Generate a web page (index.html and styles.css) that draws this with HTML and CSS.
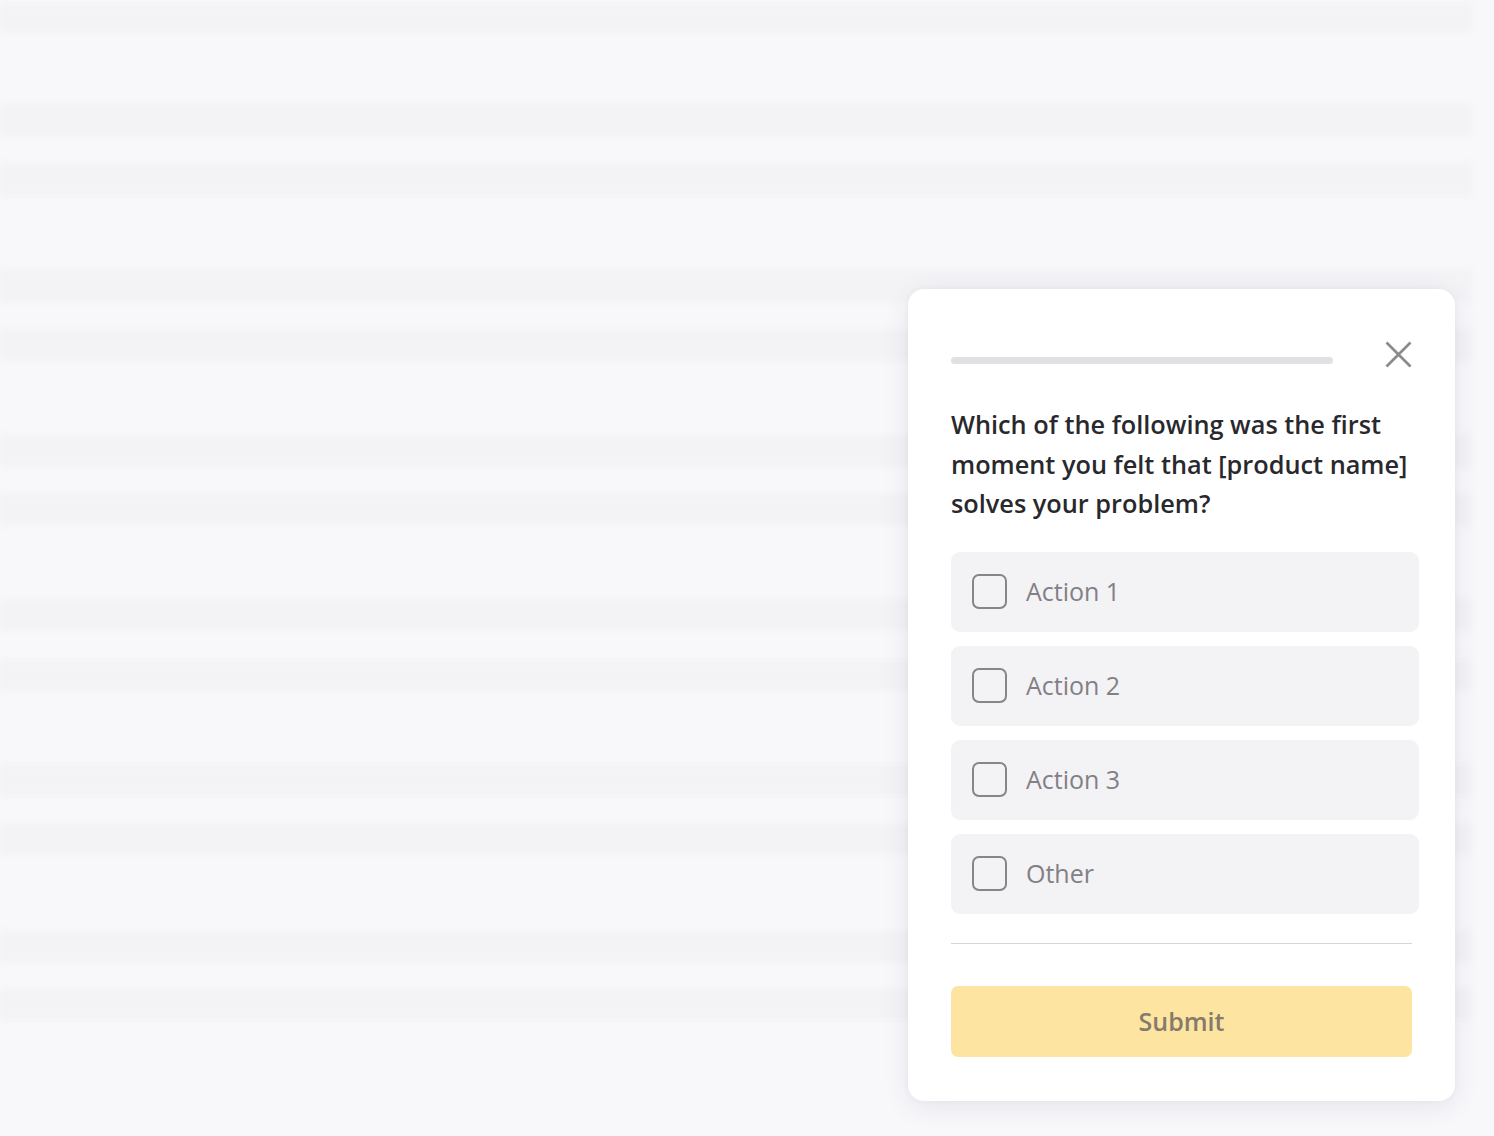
FILE: index.html
```html
<!DOCTYPE html>
<html lang="en">
<head>
<meta charset="utf-8">
<title>Survey</title>
<link rel="stylesheet" href="styles.css">
</head>
<body>
<div class="page">
  <div class="backdrop">
    <div class="stripe s1"></div>
    <div class="stripe s2"></div>
    <div class="stripe s3"></div>
    <div class="stripe s4"></div>
    <div class="stripe s5"></div>
    <div class="stripe s6"></div>
    <div class="stripe s7"></div>
    <div class="stripe s8"></div>
    <div class="stripe s9"></div>
    <div class="stripe s10"></div>
    <div class="stripe s11"></div>
    <div class="stripe s12"></div>
    <div class="stripe s13"></div>
  </div>

  <div class="card">
    <div class="card-head">
      <div class="progress"></div>
      <button class="close" aria-label="Close">
        <svg width="27" height="27" viewBox="0 0 27 27"><path d="M1.5 1.5 L25.5 25.5 M25.5 1.5 L1.5 25.5" stroke="#8b8a8c" stroke-width="2.7" fill="none" stroke-linecap="butt"/></svg>
      </button>
    </div>
    <h2 class="question">Which of the following was the first moment you felt that [product name] solves your problem?</h2>
    <div class="options">
      <label class="option"><span class="box"></span><span class="label">Action 1</span></label>
      <label class="option"><span class="box"></span><span class="label">Action 2</span></label>
      <label class="option"><span class="box"></span><span class="label">Action 3</span></label>
      <label class="option"><span class="box"></span><span class="label">Other</span></label>
    </div>
    <div class="divider"></div>
    <button class="submit">Submit</button>
  </div>
</div>
</body>
</html>
```

FILE: styles.css
```css
html, body {
  margin: 0;
  padding: 0;
}
body {
  background: #f8f7fa;
  font-family: "Open Sans", "Noto Sans", sans-serif;
  overflow: hidden;
}
.page {
  position: relative;
  width: 1494px;
  height: 1136px;
}
.backdrop {
  display: flex;
  flex-direction: column;
  width: 1472px;
  filter: blur(3px);
}
.stripe {
  height: 30px;
  background: #f3f2f5;
}
.s1 { margin-top: 4px; height: 29px; }
.s2 { margin-top: 70px; height: 33px; }
.s3 { margin-top: 27px; height: 33px; }
.s4 { margin-top: 74px; height: 32px; }
.s5 { margin-top: 27px; height: 32px; }
.s6 { margin-top: 74px; height: 32px; }
.s7 { margin-top: 27px; height: 31px; }
.s8 { margin-top: 74px; height: 31px; }
.s9 { margin-top: 30px; height: 30px; }
.s10 { margin-top: 74px; height: 32px; }
.s11 { margin-top: 28px; height: 30px; }
.s12 { margin-top: 77px; height: 31px; }
.s13 { margin-top: 27px; height: 31px; }

.card {
  position: absolute;
  left: 908px;
  top: 289px;
  width: 547px;
  height: 812px;
  box-sizing: border-box;
  padding: 52px 43px 44px 43px;
  background: #ffffff;
  border-radius: 16px;
  box-shadow: 0 6px 28px rgba(40, 30, 60, 0.08), 0 0 6px rgba(40, 30, 60, 0.04);
  display: flex;
  flex-direction: column;
}
.card-head {
  display: flex;
  align-items: flex-start;
  height: 26px;
}
.progress {
  width: 382px;
  height: 7px;
  margin-top: 16px;
  border-radius: 4px;
  background: #e1e0e3;
}
.close {
  margin-left: auto;
  margin-right: 0;
  width: 27px;
  height: 27px;
  padding: 0;
  border: 0;
  background: none;
  display: block;
}
.close svg { display: block; }
.question {
  margin: 38px 0 0 0;
  font-size: 25.3px;
  line-height: 39.5px;
  font-weight: 600;
  color: #29282d;
}
.options {
  margin-top: 28px;
  margin-right: -7px;
  display: flex;
  flex-direction: column;
  gap: 14px;
}
.option {
  height: 80px;
  box-sizing: border-box;
  padding-left: 21px;
  display: flex;
  align-items: center;
  background: #f3f2f5;
  border-radius: 9px;
}
.box {
  width: 35px;
  height: 35px;
  box-sizing: border-box;
  border: 2.7px solid #878589;
  border-radius: 7px;
  flex: none;
}
.label {
  margin-left: 19px;
  font-size: 25px;
  color: #828085;
  line-height: 1;
  padding-bottom: 1px;
}
.divider {
  margin-top: 29px;
  height: 1px;
  background: #d7d6d9;
}
.submit {
  margin-top: 42px;
  height: 71px;
  border: 0;
  border-radius: 7px;
  background: #fde4a1;
  font-family: "Open Sans", "Noto Sans", sans-serif;
  font-size: 25px;
  font-weight: 600;
  color: #847b6b;
  padding: 0;
}
```
